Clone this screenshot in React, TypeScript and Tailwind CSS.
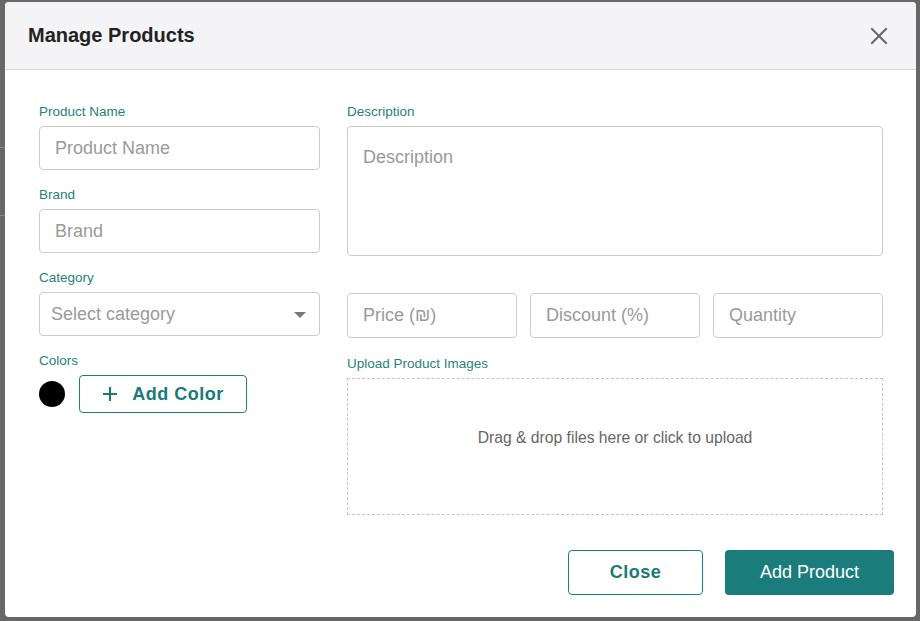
import React from "react";

const labelCls = "block text-[13.5px] leading-4 text-[#1f827c] mb-[6px]";
const inputCls =
  "w-full h-[44px] border border-[#cccccc] rounded-[4px] px-[15px] text-[18px] text-[#333] placeholder:text-[#9a9a9a] outline-none bg-white";

export default function App() {
  return (
    <div
      className="w-[920px] h-[621px] bg-[#676767] relative overflow-hidden"
      style={{ fontFamily: '"Liberation Sans", Arial, sans-serif' }}
    >
      {/* faint page behind */}
      <div className="absolute left-0 top-[147px] w-[6px] h-px bg-[#888]" />
      <div className="absolute left-0 top-[215px] w-[6px] h-px bg-[#888]" />

      <div className="absolute left-[5px] top-[2px] w-[911px] h-[615px] bg-white rounded-[4px] flex flex-col overflow-hidden">
        {/* header */}
        <div className="h-[68px] bg-[#f4f4f6] border-b border-[#d6d6d6] flex items-center justify-between pl-[23px] pr-[27px] shrink-0">
          <h2 className="text-[20px] font-bold text-[#222] -mt-[2px]">Manage Products</h2>
          <svg width="18" height="18" viewBox="0 0 18 18" className="mr-[1px]">
            <path d="M2 2 L16 16 M16 2 L2 16" stroke="#666" strokeWidth="2" strokeLinecap="square" />
          </svg>
        </div>

        {/* body */}
        <div className="flex gap-[27px] pl-[34px] pr-[33px] pt-[34px]">
          {/* left column */}
          <div className="w-[281px] flex flex-col gap-[17px]">
            <div>
              <label className={labelCls}>Product Name</label>
              <input className={inputCls} placeholder="Product Name" />
            </div>
            <div>
              <label className={labelCls}>Brand</label>
              <input className={inputCls} placeholder="Brand" />
            </div>
            <div>
              <label className={labelCls}>Category</label>
              <div className="relative">
                <div className="w-full h-[44px] border border-[#cccccc] rounded-[4px] pl-[11px] flex items-center text-[18px] text-[#9a9a9a]">
                  Select category
                </div>
                <svg width="12" height="6" viewBox="0 0 12 6" className="absolute right-[14px] top-[20px]">
                  <path d="M0 0 L12 0 L6 6 Z" fill="#777" />
                </svg>
              </div>
            </div>
            <div>
              <label className={labelCls + " mb-[6px]"}>Colors</label>
              <div className="flex items-center gap-[14px]">
                <div className="w-[26px] h-[26px] rounded-full bg-black" />
                <button className="h-[38px] w-[168px] border border-[#1f7f7c] rounded-[4px] flex items-center justify-center gap-[14px] text-[18px] font-bold text-[#1a7a78] tracking-[0.5px]">
                  <svg width="16" height="16" viewBox="0 0 16 16">
                    <path d="M8 1 V15 M1 8 H15" stroke="#1a7a78" strokeWidth="2" />
                  </svg>
                  Add Color
                </button>
              </div>
            </div>
          </div>

          {/* right column */}
          <div className="flex-1 flex flex-col">
            <label className={labelCls}>Description</label>
            <textarea
              className="w-full h-[130px] border border-[#cccccc] rounded-[4px] px-[15px] py-[18px] text-[18px] placeholder:text-[#9a9a9a] outline-none resize-none leading-[24px]"
              placeholder="Description"
            />
            <div className="grid grid-cols-3 gap-[13px] mt-[37px]">
              <input className={inputCls + " h-[45px]"} placeholder="Price (₪)" />
              <input className={inputCls + " h-[45px]"} placeholder="Discount (%)" />
              <input className={inputCls + " h-[45px]"} placeholder="Quantity" />
            </div>
            <label className={labelCls + " mt-[18px] mb-[5px]"}>Upload Product Images</label>
            <div className="h-[137px] border border-dashed border-[#c4c4c4] flex items-center justify-center pb-[18px] text-[15.7px] text-[#666]">
              Drag &amp; drop files here or click to upload
            </div>
          </div>
        </div>

        {/* footer */}
        <div className="mt-auto flex justify-end gap-[22px] pr-[22px] pb-[22px]">
          <button className="w-[135px] h-[45px] border border-[#1f7f7c] rounded-[4px] text-[18px] font-bold text-[#1a7a78] tracking-[0.5px]">
            Close
          </button>
          <button className="w-[169px] h-[45px] bg-[#1a7d7b] rounded-[4px] text-[18px] text-white">
            Add Product
          </button>
        </div>
      </div>
    </div>
  );
}
